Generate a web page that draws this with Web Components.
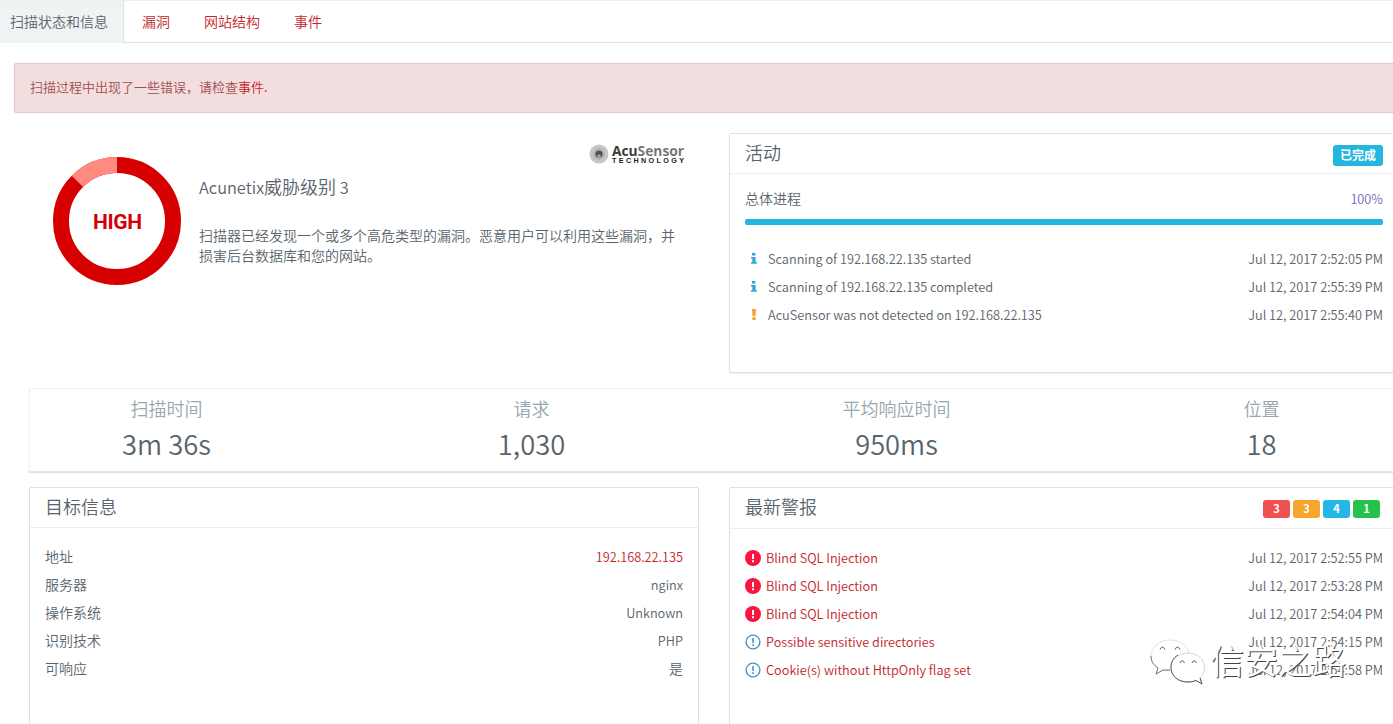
<!DOCTYPE html>
<html lang="zh-CN">
<head>
<meta charset="utf-8">
<title>扫描状态和信息</title>
<style>
html,body{margin:0;height:724px;overflow:hidden;background:#fff}
body{font-family:"Noto Sans CJK SC",sans-serif;font-size:14px;font-weight:350;color:#58636b}
</style>
</head>
<body>
<scan-page></scan-page>
<script>
const define = (name, html, setup) => {
  const t = document.createElement('template');
  t.innerHTML = html;
  customElements.define(name, class extends HTMLElement {
    constructor() {
      super();
      this.attachShadow({ mode: 'open' }).appendChild(t.content.cloneNode(true));
    }
    connectedCallback() { if (setup) setup(this, this.shadowRoot); }
  });
};

/* Latin runs are set smaller than the Chinese around them */
define('latin-text', `<style>:host{display:inline;font-size:.91em;white-space:pre}</style><slot></slot>`);

define('tab-bar', `<style>
:host{display:flex;height:43px;box-sizing:border-box;border-bottom:1px solid #dee2e5;border-top:1px solid #edf0f1}
</style><slot></slot>`);

define('tab-item', `<style>
:host{display:block;box-sizing:border-box;height:41px;line-height:40px;padding:0 17px;color:#c4242b;white-space:nowrap}
:host([active]){width:124px;height:42px;padding:0 0 0 10px;margin-right:1px;background:#f0f3f3;color:#58636b;border-right:1px solid #dee5e7}
</style><slot></slot>`);

define('alert-bar', `<style>
:host{display:block;box-sizing:border-box;width:1400px;height:50px;border:1px solid #e4c6cb;border-radius:2px;background:#f2dede;padding:0 15px;line-height:45px;font-size:13px;color:#a14d4d}
::slotted(b){font-weight:inherit;color:#c4242b}
</style><slot></slot>`);

define('threat-ring', `<style>:host{display:block;width:128px;height:128px}svg{display:block}
text{font:700 21px Roboto,sans-serif;fill:#d30008}</style>
<svg width="128" height="128" viewBox="0 0 128 128">
<circle cx="64" cy="64" r="56" fill="none" stroke="#d60000" stroke-width="16"/>
<path d="M64 8A56 56 0 0 0 24.4 24.4" fill="none" stroke="#ff8a80" stroke-width="16"/>
<text x="64.500" y="72" text-anchor="middle" textLength="49">HIGH</text></svg>`);

define('acusensor-logo', `<style>:host{display:block;width:98px;height:22px}svg{display:block;overflow:visible}
.a{font:700 13.5px "Open Sans",sans-serif}.t{font:700 7.2px "Liberation Sans",sans-serif;fill:#222}</style>
<svg width="98" height="22" viewBox="0 0 98 22">
<circle cx="10" cy="11" r="9.500" fill="#c6c6c6"/><circle cx="10" cy="11" r="6" fill="#b4b4b4"/>
<circle cx="10" cy="11" r="3.600" fill="#505050"/><ellipse cx="10" cy="12.800" rx="1.800" ry="1.300" fill="#aaa"/>
<text class="a" x="23" y="13" textLength="72" lengthAdjust="spacingAndGlyphs"><tspan fill="#3c3c3c">Acu</tspan><tspan fill="#777">Sensor</tspan></text>
<text class="t" x="23" y="20" textLength="72">TECHNOLOGY</text></svg>`);

define('threat-summary', `<style>
:host{display:grid;grid-template-columns:146px 1fr;box-sizing:border-box;width:670px;height:240px;padding-left:24px}
threat-ring{margin-top:24px}
.info{display:flex;flex-direction:column}
acusensor-logo{align-self:flex-end;margin:10px 12px 0 0}
h2{font-size:18px;line-height:24px;font-weight:inherit;margin:9px 0 26px}
p{margin:0;line-height:20px;width:482px}
</style><threat-ring></threat-ring><div class="info"><acusensor-logo></acusensor-logo>
<h2><slot name="title"></slot></h2><p><slot></slot></p></div>`);

define('info-panel', `<style>
:host{display:block;box-sizing:border-box;width:670px;border:1px solid #dee1e4;border-radius:2px;background:#fff;box-shadow:0 1px 1px rgba(0,0,0,.06)}
header{box-sizing:border-box;height:var(--head,40px);display:flex;justify-content:space-between;padding:0 15px;border-bottom:1px solid #e9eef0}
h3{font-size:18px;line-height:37px;font-weight:inherit;margin:0}
.tools{display:flex;gap:3px;align-items:flex-start;padding-top:11px}
section{padding:0 15px}
</style><header><h3><slot name="title"></slot></h3><div class="tools"><slot name="tools"></slot></div></header><section><slot></slot></section>`);

define('status-badge', `<style>
:host{display:block;box-sizing:border-box;height:21px;line-height:19px;padding:0 7px;border-radius:3px;background:var(--c,#23b7e0);color:#fff;font-size:12px;font-weight:700}
:host([count]){width:27px;height:18px;line-height:17px;padding:0;text-align:center;font-size:11px}
</style><slot></slot>`);

define('progress-line', `<style>
:host{display:block;padding-top:14px}
.row{display:flex;justify-content:space-between;line-height:20px;height:20px}
.row span{color:#7266ba}
.bar{height:6px;margin-top:11px;border-radius:2px;background:#23b7e0}
</style><div class="row"><slot></slot><span><latin-text>100%</latin-text></span></div><div class="bar"></div>`);

const icons = {
  info: `<svg width="18" height="16" viewBox="0 0 18 16"><path fill="#2ba8d8" d="M7 2h3.400v2.600H7zM6 6h4.600v5.300H12v1.500H6v-1.500h1.300V7.500H6z"/></svg>`,
  warn: `<svg width="18" height="16" viewBox="0 0 18 16"><path fill="#f0a03c" d="M7 2h4l-.5 7.200H7.500zM7.300 10.300h3.400V13H7.300z"/></svg>`,
  high: `<svg width="16" height="16" viewBox="0 0 16 16"><circle cx="8" cy="8" r="8" fill="#fa1440"/><path fill="#fff" d="M7 4h2v5H7zM7 10.300h2v2H7z"/></svg>`,
  low: `<svg width="16" height="16" viewBox="0 0 16 16"><circle cx="8" cy="8" r="6.900" fill="none" stroke="#4a90cc" stroke-width="1.400"/><path fill="#4a90cc" d="M7.200 4h1.600v5H7.200zM7.200 10.300h1.600v1.600H7.200z"/></svg>`
};
define('list-row', `<style>
:host{display:flex;align-items:flex-start;height:28px;line-height:26px;white-space:nowrap}
.i{display:none;padding-top:6px}svg{display:block}
:host([icon]) .i{display:block;width:21px}
:host([icon=info]) .i,:host([icon=warn]) .i{width:23px}
.n{flex:1}
:host([link]) .n,:host([hot]) .v{color:#c4242b}
</style><span class="i"></span><span class="n"><slot></slot></span><span class="v"><slot name="v"></slot></span>`,
(el, root) => { root.querySelector('.i').innerHTML = icons[el.getAttribute('icon')] || ''; });

define('stat-strip', `<style>
:host{display:block;box-sizing:border-box;width:1370px;height:84px;border:1px solid #f0f1f2;border-bottom-color:#e5e6e7;box-shadow:0 1px 1px rgba(0,0,0,.12)}
div{display:grid;grid-template-columns:repeat(4,365px);margin-left:-46px}
</style><div><slot></slot></div>`);
define('stat-cell', `<style>
:host{display:block;text-align:center}
.l{font-size:18px;line-height:24px;padding-top:7px;color:#98a6ad}
.v{font-size:30px;line-height:40px;margin-top:2px}
</style><div class="l"><slot></slot></div><div class="v"><latin-text><slot name="v"></slot></latin-text></div>`);

define('wechat-mark', `<style>
:host{position:absolute;left:1148px;top:636px;display:flex;z-index:2}
svg{display:block}
span{font-size:34px;line-height:48px;margin-left:2px;color:#fff;text-shadow:1px 1px 0 #444;white-space:nowrap}
</style><svg width="60" height="52" viewBox="0 0 60 52">
<g fill="#fff" stroke-linejoin="round">
<path d="M22 4C11 4 3 11 3 20c0 6 3 9 7 12l-2 6 7-4c4 1 8 1 11 0 10-2 15-8 15-16C40 10 32 4 22 4z" stroke="#ccc" stroke-width=".6"/>
<path d="M3 20c0 6 3 9 7 12l-2 6 7-4h7" fill="none" stroke="#777"/>
<path d="M40 17c-9 0-17 6-17 14.500S30 46 40 46c3 0 5-.4 8-1.500l6 3.500-2-6c3-2.500 4.500-6 4.500-10.500C56.500 23 49 17 40 17z" stroke="#bbb" stroke-width=".6"/>
<path d="M30 19c-5 3-7 7-7 12.500C23 40 30 46 40 46c3 0 5-.4 8-1.500l6 3.500-2-6" fill="none" stroke="#555"/></g>
<path d="M12 13.500q2.500-5 5 0M27 13.500q2.500-5 5 0M32 27q2-4.500 4.500 0M44 27q2-4.500 4.500 0" fill="none" stroke="#555"/></svg><span>信安之路</span>`);

define('scan-page', `<style>
:host{display:block;position:relative;width:1393px;height:724px;overflow:hidden}
main{display:flex;flex-direction:column;padding:20px 0 0 14px}
.cols{display:grid;grid-template-columns:670px 670px;gap:30px;margin-left:15px}
.top{margin-top:20px}
stat-strip{margin:15px 0 15px 15px}
.tall{height:260px}
.list{padding-top:15px}
.activity{height:240px}
.activity .list{padding-top:20px}
.counts{display:flex;gap:3px;padding:1px 3px 0 0}
.alerts{--head:41px}
</style>
<tab-bar><tab-item active>扫描状态和信息</tab-item><tab-item>漏洞</tab-item><tab-item>网站结构</tab-item><tab-item>事件</tab-item></tab-bar>
<main>
<alert-bar>扫描过程中出现了一些错误，请检查<b>事件</b><b>.</b></alert-bar>
<div class="cols top">
<threat-summary><span slot="title"><latin-text>Acunetix</latin-text>威胁级别<latin-text> 3</latin-text></span>扫描器已经发现一个或多个高危类型的漏洞。恶意用户可以利用这些漏洞，并损害后台数据库和您的网站。</threat-summary>
<info-panel class="activity"><span slot="title">活动</span><status-badge slot="tools">已完成</status-badge>
<progress-line>总体进程</progress-line>
<div class="list">
<list-row icon="info"><latin-text>Scanning of 192.168.22.135 started</latin-text><latin-text slot="v">Jul 12, 2017 2:52:05 PM</latin-text></list-row>
<list-row icon="info"><latin-text>Scanning of 192.168.22.135 completed</latin-text><latin-text slot="v">Jul 12, 2017 2:55:39 PM</latin-text></list-row>
<list-row icon="warn"><latin-text>AcuSensor was not detected on 192.168.22.135</latin-text><latin-text slot="v">Jul 12, 2017 2:55:40 PM</latin-text></list-row>
</div></info-panel>
</div>
<stat-strip>
<stat-cell>扫描时间<span slot="v">3m 36s</span></stat-cell>
<stat-cell>请求<span slot="v">1,030</span></stat-cell>
<stat-cell>平均响应时间<span slot="v">950ms</span></stat-cell>
<stat-cell>位置<span slot="v">18</span></stat-cell>
</stat-strip>
<div class="cols">
<info-panel class="tall"><span slot="title">目标信息</span><div class="list">
<list-row hot>地址<latin-text slot="v">192.168.22.135</latin-text></list-row>
<list-row>服务器<latin-text slot="v">nginx</latin-text></list-row>
<list-row>操作系统<latin-text slot="v">Unknown</latin-text></list-row>
<list-row>识别技术<latin-text slot="v">PHP</latin-text></list-row>
<list-row>可响应<span slot="v">是</span></list-row>
</div></info-panel>
<info-panel class="tall alerts"><span slot="title">最新警报</span>
<div slot="tools" class="counts"><status-badge count style="--c:#f05050">3</status-badge><status-badge count style="--c:#f8a530">3</status-badge><status-badge count style="--c:#23b7e5">4</status-badge><status-badge count style="--c:#27c24c">1</status-badge></div>
<div class="list">
<list-row link icon="high"><latin-text>Blind SQL Injection</latin-text><latin-text slot="v">Jul 12, 2017 2:52:55 PM</latin-text></list-row>
<list-row link icon="high"><latin-text>Blind SQL Injection</latin-text><latin-text slot="v">Jul 12, 2017 2:53:28 PM</latin-text></list-row>
<list-row link icon="high"><latin-text>Blind SQL Injection</latin-text><latin-text slot="v">Jul 12, 2017 2:54:04 PM</latin-text></list-row>
<list-row link icon="low"><latin-text>Possible sensitive directories</latin-text><latin-text slot="v">Jul 12, 2017 2:54:15 PM</latin-text></list-row>
<list-row link icon="low"><latin-text>Cookie(s) without HttpOnly flag set</latin-text><latin-text slot="v">Jul 12, 2017 2:54:58 PM</latin-text></list-row>
</div></info-panel>
</div>
</main>
<wechat-mark></wechat-mark>`);
</script>
</body>
</html>
